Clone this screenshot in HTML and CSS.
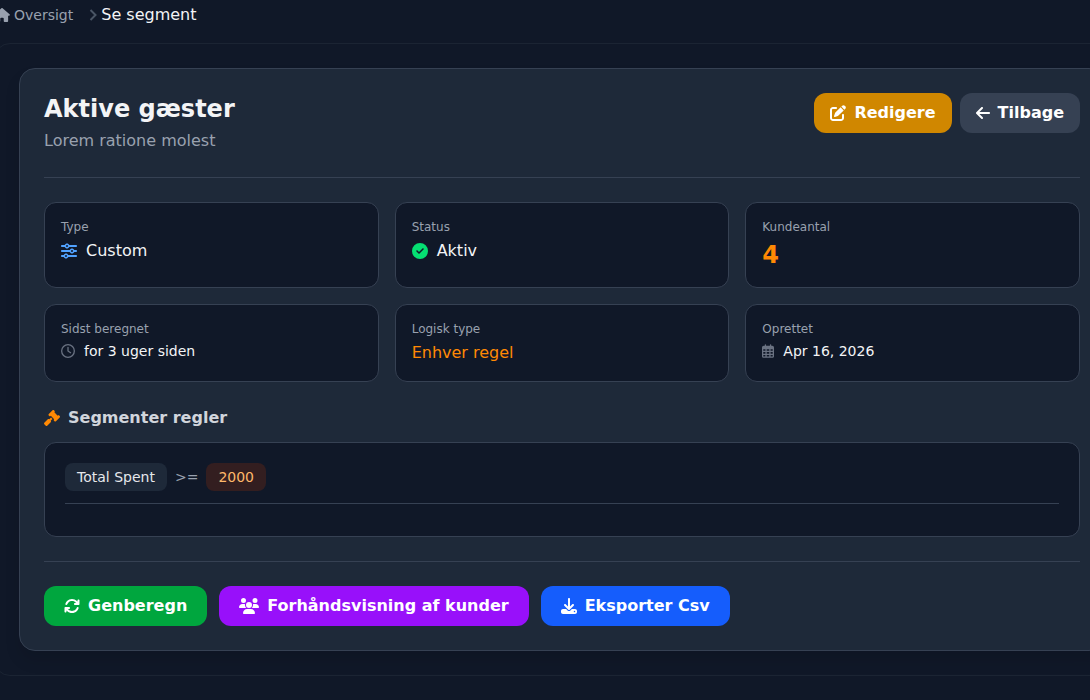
FILE: index.html
```html
<!DOCTYPE html>
<html lang="da">
<head>
  <meta charset="UTF-8" />
  <meta name="viewport" content="width=device-width, initial-scale=1.0"/>
  <title>Se segment</title>
  <link rel="stylesheet" href="styles.css">
</head>
<body>
  <div class="page">
    <nav class="breadcrumb">
      <a href="#" class="crumb">
        <svg class="icon" viewBox="0 0 576 512"><path d="M575.8 255.5c0 18-15 32.1-32 32.1l-32 0 .7 160.2c0 2.7-.2 5.4-.5 8.1l0 16.2c0 22.1-17.9 40-40 40l-16 0c-1.1 0-2.2 0-3.3-.1c-1.4 .1-2.8 .1-4.2 .1L416 512l-24 0c-22.1 0-40-17.9-40-40l0-24 0-64c0-17.7-14.3-32-32-32l-64 0c-17.7 0-32 14.3-32 32l0 64 0 24c0 22.1-17.9 40-40 40l-24 0-31.9 0c-1.5 0-3-.1-4.5-.2c-1.2 .1-2.4 .2-3.6 .2l-16 0c-22.1 0-40-17.9-40-40l0-112c0-.9 0-1.9 .1-2.8l0-69.7-32 0c-18 0-32-14-32-32.1c0-9 3-17 10-24L266.4 8c7-7 15-8 22-8s15 2 21 7L564.8 231.5c8 7 12 15 11 24z"/></svg>
        Oversigt
      </a>
      <svg class="separator" viewBox="0 0 8 12"><path d="M1.5 1l5 5-5 5"/></svg>
      <span class="crumb-current">Se segment</span>
    </nav>

    <main class="panel">
      <section class="card">
        <header class="card-header">
          <div>
            <h1>Aktive gæster</h1>
            <p class="description">Lorem ratione molest</p>
          </div>
          <div class="header-actions">
            <a href="#" class="btn btn-edit">
              <svg class="icon" viewBox="0 0 512 512"><path d="M471.6 21.7c-21.9-21.9-57.3-21.9-79.2 0L362.3 51.7l97.9 97.9 30.1-30.1c21.9-21.9 21.9-57.3 0-79.2L471.6 21.7zm-299.2 220c-6.1 6.1-10.8 13.6-13.5 21.9l-29.6 88.8c-2.9 8.6-.6 18.1 5.8 24.6s15.9 8.7 24.6 5.8l88.8-29.6c8.2-2.7 15.7-7.4 21.9-13.5L437.7 172.3 339.7 74.3 172.4 241.7zM96 64C43 64 0 107 0 160L0 416c0 53 43 96 96 96l256 0c53 0 96-43 96-96l0-96c0-17.7-14.3-32-32-32s-32 14.3-32 32l0 96c0 17.7-14.3 32-32 32L96 448c-17.7 0-32-14.3-32-32l0-256c0-17.7 14.3-32 32-32l96 0c17.7 0 32-14.3 32-32s-14.3-32-32-32L96 64z"/></svg>
              Redigere
            </a>
            <a href="#" class="btn btn-back">
              <svg class="icon icon-narrow" viewBox="0 0 448 512"><path d="M9.4 233.4c-12.5 12.5-12.5 32.8 0 45.3l160 160c12.5 12.5 32.8 12.5 45.3 0s12.5-32.8 0-45.3L109.2 288 416 288c17.7 0 32-14.3 32-32s-14.3-32-32-32l-306.7 0L214.6 118.6c12.5-12.5 12.5-32.8 0-45.3s-32.8-12.5-45.3 0l-160 160z"/></svg>
              Tilbage
            </a>
          </div>
        </header>

        <div class="stats">
          <div class="stat">
            <p class="label">Type</p>
            <p class="value">
              <svg class="icon blue" viewBox="0 0 512 512"><path d="M0 416c0 17.7 14.3 32 32 32l54.7 0c12.3 28.3 40.5 48 73.3 48s61-19.7 73.3-48L480 448c17.7 0 32-14.3 32-32s-14.3-32-32-32l-246.7 0c-12.3-28.3-40.5-48-73.3-48s-61 19.7-73.3 48L32 384c-17.7 0-32 14.3-32 32zm128 0a32 32 0 1 1 64 0 32 32 0 1 1 -64 0zM320 256a32 32 0 1 1 64 0 32 32 0 1 1 -64 0zm32-80c-32.8 0-61 19.7-73.3 48L32 224c-17.7 0-32 14.3-32 32s14.3 32 32 32l246.7 0c12.3 28.3 40.5 48 73.3 48s61-19.7 73.3-48l54.7 0c17.7 0 32-14.3 32-32s-14.3-32-32-32l-54.7 0c-12.3-28.3-40.5-48-73.3-48zM192 128a32 32 0 1 1 0-64 32 32 0 1 1 0 64zm73.3-64C253 35.7 224.8 16 192 16s-61 19.7-73.3 48L32 64C14.3 64 0 78.3 0 96s14.3 32 32 32l86.7 0c12.3 28.3 40.5 48 73.3 48s61-19.7 73.3-48L480 128c17.7 0 32-14.3 32-32s-14.3-32-32-32L265.3 64z"/></svg>
              Custom
            </p>
          </div>
          <div class="stat">
            <p class="label">Status</p>
            <p class="value">
              <svg class="icon green" viewBox="0 0 512 512"><path d="M256 512A256 256 0 1 0 256 0a256 256 0 1 0 0 512zM369 209L241 337c-9.4 9.4-24.6 9.4-33.9 0l-64-64c-9.4-9.4-9.4-24.6 0-33.9s24.6-9.4 33.9 0l47 47L335 175c9.4-9.4 24.6-9.4 33.9 0s9.4 24.6 0 33.9z"/></svg>
              Aktiv
            </p>
          </div>
          <div class="stat">
            <p class="label">Kundeantal</p>
            <p class="count">4</p>
          </div>
          <div class="stat">
            <p class="label">Sidst beregnet</p>
            <p class="value value-small">
              <svg class="icon gray" viewBox="0 0 512 512"><path d="M464 256A208 208 0 1 1 48 256a208 208 0 1 1 416 0zM0 256a256 256 0 1 0 512 0A256 256 0 1 0 0 256zM232 120l0 136c0 8 4 15.5 10.7 20l96 64c11 7.4 25.9 4.4 33.3-6.7s4.4-25.9-6.7-33.3L280 243.2 280 120c0-13.3-10.7-24-24-24s-24 10.7-24 24z"/></svg>
              for 3 uger siden
            </p>
          </div>
          <div class="stat">
            <p class="label">Logisk type</p>
            <p class="value orange">Enhver regel</p>
          </div>
          <div class="stat">
            <p class="label">Oprettet</p>
            <p class="value value-small">
              <svg class="icon icon-narrow gray" viewBox="0 0 448 512"><path d="M152 24c0-13.3-10.7-24-24-24s-24 10.7-24 24l0 40L64 64C28.7 64 0 92.7 0 128l0 16 0 48L0 448c0 35.3 28.7 64 64 64l320 0c35.3 0 64-28.7 64-64l0-256 0-48 0-16c0-35.3-28.7-64-64-64l-40 0 0-40c0-13.3-10.7-24-24-24s-24 10.7-24 24l0 40L152 64l0-40zM48 192l80 0 0 56-80 0 0-56zm0 104l80 0 0 64-80 0 0-64zm128 0l96 0 0 64-96 0 0-64zm144 0l80 0 0 64-80 0 0-64zm80-48l-80 0 0-56 80 0 0 56zm0 160l0 40c0 8.8-7.2 16-16 16l-64 0 0-56 80 0zm-128 0l0 56-96 0 0-56 96 0zm-144 0l0 56-64 0c-8.8 0-16-7.2-16-16l0-40 80 0zM272 248l-96 0 0-56 96 0 0 56z"/></svg>
              Apr 16, 2026
            </p>
          </div>
        </div>

        <h2>
          <svg class="icon orange" viewBox="0 0 512 512"><path d="M318.6 9.4c-12.5-12.5-32.8-12.5-45.3 0l-120 120c-12.5 12.5-12.5 32.8 0 45.3l16 16c12.5 12.5 32.8 12.5 45.3 0l4-4L325.4 293.4l-4 4c-12.5 12.5-12.5 32.8 0 45.3l16 16c12.5 12.5 32.8 12.5 45.3 0l120-120c12.5-12.5 12.5-32.8 0-45.3l-16-16c-12.5-12.5-32.8-12.5-45.3 0l-4 4L330.6 74.6l4-4c12.5-12.5 12.5-32.8 0-45.3l-16-16zm-152 288c-12.5-12.5-32.8-12.5-45.3 0l-112 112c-12.5 12.5-12.5 32.8 0 45.3l48 48c12.5 12.5 32.8 12.5 45.3 0l112-112c12.5-12.5 12.5-32.8 0-45.3l-1.4-1.4L272 285.3 226.7 240 168 298.7l-1.4-1.4z"/></svg>
          Segmenter regler
        </h2>
        <div class="rules">
          <div class="rule">
            <span class="tag">Total Spent</span>
            <span class="operator">&gt;=</span>
            <span class="tag tag-value">2000</span>
          </div>
        </div>

        <footer class="card-footer">
          <button type="button" class="btn btn-recalc">
            <svg class="icon" viewBox="0 0 512 512"><path d="M105.1 202.6c7.7-21.8 20.2-42.3 37.8-59.8c62.5-62.5 163.8-62.5 226.3 0L386.3 160 352 160c-17.7 0-32 14.3-32 32s14.3 32 32 32l111.5 0c0 0 0 0 0 0l.4 0c17.7 0 32-14.3 32-32l0-112c0-17.7-14.3-32-32-32s-32 14.3-32 32l0 35.2L414.4 97.6c-87.5-87.5-229.3-87.5-316.8 0C73.2 122 55.6 150.7 44.8 181.4c-5.9 16.7 2.9 34.9 19.5 40.8s34.9-2.9 40.8-19.5zM39 289.3c-5 1.5-9.8 4.2-13.7 8.2c-4 4-6.7 8.8-8.1 14c-.3 1.2-.6 2.5-.8 3.8c-.3 1.7-.4 3.4-.4 5.1L16 432c0 17.7 14.3 32 32 32s32-14.3 32-32l0-35.1 17.6 17.5c0 0 0 0 0 0c87.5 87.4 229.3 87.4 316.7 0c24.4-24.4 42.1-53.1 52.9-83.8c5.9-16.7-2.9-34.9-19.5-40.8s-34.9 2.9-40.8 19.5c-7.7 21.8-20.2 42.3-37.8 59.8c-62.5 62.5-163.8 62.5-226.3 0l-.1-.1L125.6 352l34.4 0c17.7 0 32-14.3 32-32s-14.3-32-32-32L48.4 288c-1.6 0-3.2 .1-4.8 .3s-3.1 .5-4.6 1z"/></svg>
            Genberegn
          </button>
          <button type="button" class="btn btn-preview">
            <svg class="icon icon-wide" viewBox="0 0 640 512"><path d="M144 0a80 80 0 1 1 0 160A80 80 0 1 1 144 0zM512 0a80 80 0 1 1 0 160A80 80 0 1 1 512 0zM0 298.7C0 239.8 47.8 192 106.7 192l42.7 0c15.9 0 31 3.5 44.6 9.7c-1.3 7.2-1.9 14.7-1.9 22.3c0 38.2 16.8 72.5 43.3 96c-.2 0-.4 0-.7 0L21.3 320C9.6 320 0 310.4 0 298.7zM405.3 320c-.2 0-.4 0-.7 0c26.6-23.5 43.3-57.8 43.3-96c0-7.6-.7-15-1.9-22.3c13.6-6.3 28.7-9.7 44.6-9.7l42.7 0C592.2 192 640 239.8 640 298.7c0 11.8-9.6 21.3-21.3 21.3l-213.3 0zM224 224a96 96 0 1 1 192 0 96 96 0 1 1 -192 0zM128 485.3C128 411.7 187.7 352 261.3 352l117.3 0C452.3 352 512 411.7 512 485.3c0 14.7-11.9 26.7-26.7 26.7l-330.7 0c-14.7 0-26.7-11.9-26.7-26.7z"/></svg>
            Forhåndsvisning af kunder
          </button>
          <a href="#" class="btn btn-export">
            <svg class="icon" viewBox="0 0 512 512"><path d="M288 32c0-17.7-14.3-32-32-32s-32 14.3-32 32l0 242.7-73.4-73.4c-12.5-12.5-32.8-12.5-45.3 0s-12.5 32.8 0 45.3l128 128c12.5 12.5 32.8 12.5 45.3 0l128-128c12.5-12.5 12.5-32.8 0-45.3s-32.8-12.5-45.3 0L288 274.7 288 32zM64 352c-35.3 0-64 28.7-64 64l0 32c0 35.3 28.7 64 64 64l384 0c35.3 0 64-28.7 64-64l0-32c0-35.3-28.7-64-64-64l-101.5 0-45.3 45.3c-25 25-65.5 25-90.5 0L165.5 352 64 352zm368 56a24 24 0 1 1 0 48 24 24 0 1 1 0-48z"/></svg>
            Eksporter Csv
          </a>
        </footer>
      </section>
    </main>
  </div>
</body>
</html>
```
FILE: styles.css
```css
* {
  box-sizing: border-box;
  margin: 0;
  padding: 0;
}

body {
  font-family: 'DejaVu Sans', sans-serif;
  font-size: 16px;
  line-height: 24px;
  background-color: #101828;
  color: #f3f4f6;
  overflow-x: hidden;
}

a {
  color: inherit;
  text-decoration: none;
}

/* the page bleeds past both window edges */
.page {
  margin: 0 -40px 0 -6px;
}

.icon {
  width: 16px;
  height: 16px;
  fill: currentColor;
  flex-shrink: 0;
}

.icon-narrow {
  width: 14px;
}

.icon-wide {
  width: 20px;
}

.blue {
  color: #51a2ff;
}

.green {
  color: #05df72;
}

.gray {
  color: #6a7282;
}

.orange {
  color: #ff8904;
}

/* breadcrumb */
.breadcrumb {
  display: flex;
  align-items: center;
  padding: 3px 0;
  margin-bottom: 13px;
}

.crumb {
  display: flex;
  align-items: center;
  gap: 4px;
  font-size: 14px;
  color: #99a1af;
}

.crumb .icon {
  height: 14px;
}

.separator {
  width: 8px;
  height: 12px;
  margin: 0 4px 0 16px;
  fill: none;
  stroke: #4a5565;
  stroke-width: 2;
}

/* panel and card */
.panel {
  padding: 24px;
  border: 1px solid #1b2433;
  border-radius: 16px;
}

.card {
  padding: 24px;
  background-color: #1e2939;
  border: 1px solid #364153;
  border-radius: 16px;
  box-shadow: 0 10px 15px rgba(0, 0, 0, 0.1);
}

.card-header {
  display: flex;
  justify-content: space-between;
  align-items: flex-start;
  padding-bottom: 24px;
  margin-bottom: 24px;
  border-bottom: 1px solid #364153;
}

h1 {
  font-size: 24px;
  line-height: 32px;
  margin-bottom: 4px;
}

.description {
  color: #99a1af;
}

.header-actions {
  display: flex;
  gap: 8px;
}

.btn {
  display: flex;
  align-items: center;
  gap: 8px;
  padding: 8px 20px;
  border: none;
  border-radius: 12px;
  font: inherit;
  font-weight: bold;
  color: #fff;
  cursor: pointer;
}

.header-actions .btn {
  padding: 8px 16px;
}

.btn-edit {
  background-color: #d08700;
}

.btn-back {
  background-color: #364153;
}

.btn-recalc {
  background-color: #00a63e;
}

.btn-preview {
  background-color: #9810fa;
}

.btn-export {
  background-color: #155dfc;
}

/* stats */
.stats {
  display: grid;
  grid-template-columns: repeat(3, 1fr);
  gap: 16px;
  margin-bottom: 24px;
}

.stat {
  padding: 16px;
  background-color: #101828;
  border: 1px solid #364153;
  border-radius: 12px;
}

.label {
  font-size: 12px;
  line-height: 16px;
  margin-bottom: 4px;
  color: #99a1af;
}

.value {
  display: flex;
  align-items: center;
  gap: 9px;
}

.value-small {
  font-size: 14px;
  line-height: 20px;
}

.value-small .icon {
  width: 14px;
  height: 14px;
}

.value-small .icon-narrow {
  width: 12px;
}

.count {
  font-size: 24px;
  line-height: 32px;
  font-weight: bold;
  color: #ff8904;
}

/* rules */
h2 {
  display: flex;
  align-items: center;
  gap: 8px;
  font-size: 16px;
  margin-bottom: 12px;
  color: #d1d5dc;
}

.rules {
  padding: 20px;
  margin-bottom: 24px;
  background-color: #101828;
  border: 1px solid #364153;
  border-radius: 12px;
}

.rule {
  display: flex;
  align-items: center;
  gap: 8px;
  padding-bottom: 12px;
  margin-bottom: 12px;
  border-bottom: 1px solid #364153;
  font-size: 14px;
  line-height: 20px;
}

.tag {
  padding: 4px 12px;
  border-radius: 8px;
  background-color: #1e2939;
  color: #e5e7eb;
}

.tag-value {
  background-color: #331e20;
  color: #ffb86a;
}

.operator {
  color: #99a1af;
}

.card-footer {
  display: flex;
  gap: 12px;
  padding-top: 24px;
  border-top: 1px solid #364153;
}
```
